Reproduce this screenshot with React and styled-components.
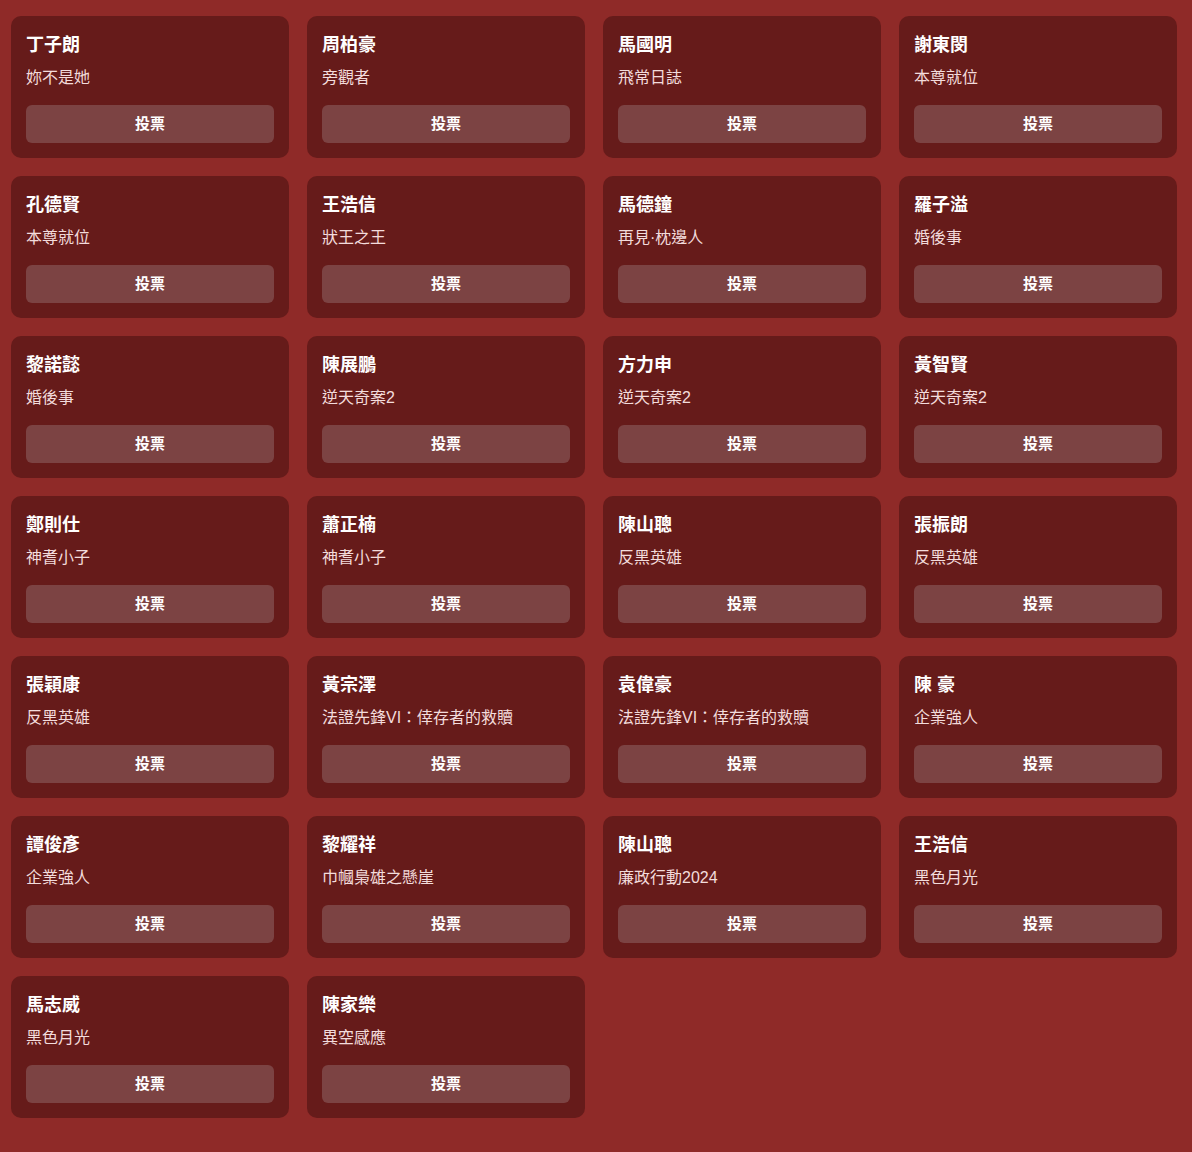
import React from 'react'
import styled, { createGlobalStyle } from 'styled-components'

const nominees = [
	{ name: '丁子朗', work: '妳不是她' },
	{ name: '周柏豪', work: '旁觀者' },
	{ name: '馬國明', work: '飛常日誌' },
	{ name: '謝東閔', work: '本尊就位' },
	{ name: '孔德賢', work: '本尊就位' },
	{ name: '王浩信', work: '狀王之王' },
	{ name: '馬德鐘', work: '再見·枕邊人' },
	{ name: '羅子溢', work: '婚後事' },
	{ name: '黎諾懿', work: '婚後事' },
	{ name: '陳展鵬', work: '逆天奇案2' },
	{ name: '方力申', work: '逆天奇案2' },
	{ name: '黃智賢', work: '逆天奇案2' },
	{ name: '鄭則仕', work: '神耆小子' },
	{ name: '蕭正楠', work: '神耆小子' },
	{ name: '陳山聰', work: '反黑英雄' },
	{ name: '張振朗', work: '反黑英雄' },
	{ name: '張穎康', work: '反黑英雄' },
	{ name: '黃宗澤', work: '法證先鋒VI：倖存者的救贖' },
	{ name: '袁偉豪', work: '法證先鋒VI：倖存者的救贖' },
	{ name: '陳 豪', work: '企業強人' },
	{ name: '譚俊彥', work: '企業強人' },
	{ name: '黎耀祥', work: '巾幗梟雄之懸崖' },
	{ name: '陳山聰', work: '廉政行動2024' },
	{ name: '王浩信', work: '黑色月光' },
	{ name: '馬志威', work: '黑色月光' },
	{ name: '陳家樂', work: '異空感應' },
]

const GlobalStyle = createGlobalStyle`
	html, body {
		margin: 0;
		padding: 0;
		background: #8f2a28;
		font-family: "Liberation Sans", "Noto Sans CJK TC", sans-serif;
	}
`

export default function App() {
	return (
		<>
			<GlobalStyle />
			<Page>
				<Grid>
					{nominees.map((n, i) => (
						<Card key={i}>
							<Name>{n.name}</Name>
							<Work>{n.work}</Work>
							<VoteButton>投票</VoteButton>
						</Card>
					))}
				</Grid>
			</Page>
		</>
	)
}

// STYLED COMPONENTS
const Page = styled.div`
	min-height: 1152px;
	box-sizing: border-box;
	padding: 16px 15px 34px 11px;
	background: #8f2a28;
`
const Grid = styled.div`
	display: grid;
	grid-template-columns: repeat(4, 1fr);
	gap: 18px;
`
const Card = styled.div`
	display: flex;
	flex-direction: column;
	background: #661b1a;
	border-radius: 10px;
	padding: 16px 15px 15px;
	height: 142px;
	box-sizing: border-box;
`
const Name = styled.div`
	font-size: 18px;
	font-weight: 700;
	line-height: 26px;
	color: #ffffff;
`
const Work = styled.div`
	margin-top: 9px;
	font-size: 16px;
	line-height: 22px;
	color: #f3dcdc;
	white-space: nowrap;
`
const VoteButton = styled.button`
	margin-top: 16px;
	height: 38px;
	width: 100%;
	border: none;
	border-radius: 6px;
	background: #7c4343;
	color: #ffffff;
	font-family: inherit;
	font-size: 15px;
	font-weight: 700;
	line-height: 38px;
	padding: 0;
	cursor: pointer;
`
